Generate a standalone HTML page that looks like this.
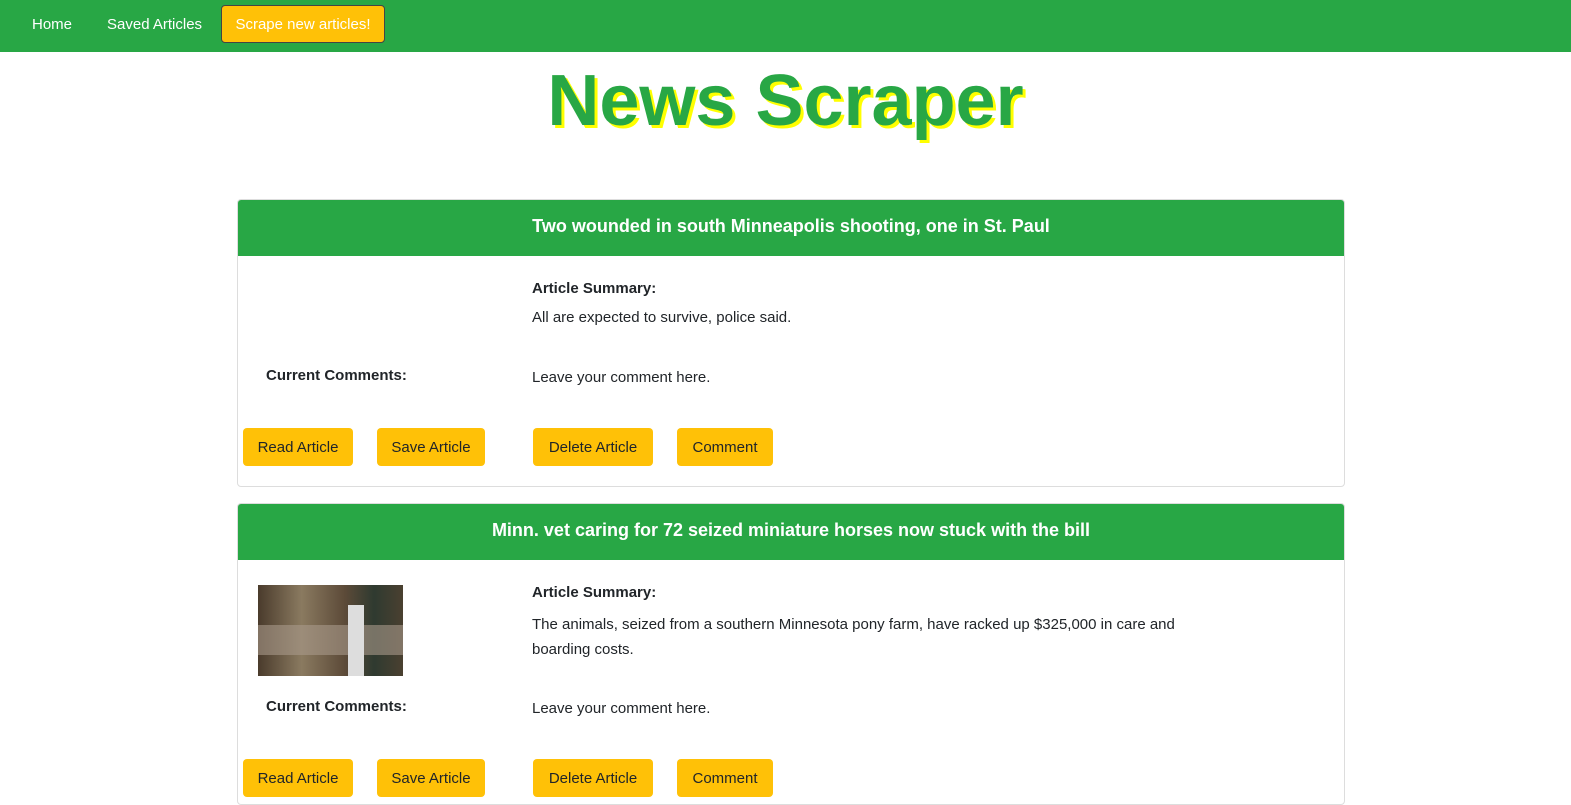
<!DOCTYPE html>
<html><head><style>
body{margin:0;width:1571px;height:778px;overflow:hidden;background:#fff;font-family:"Liberation Sans",sans-serif;color:#212529;font-size:15px;position:relative}
.nav{position:absolute;left:0;top:0;width:1571px;height:52px;background:#28a745}
.nav span{position:absolute;top:16px;color:#fff;font-size:15px}
.scr{position:absolute;left:221px;top:5px;width:162px;height:36px;background:#ffc107;border:1px solid #444;border-radius:4px;color:#fff;font-size:15px;line-height:38px;text-align:center}
h1{position:absolute;left:0;width:1571px;top:56px;margin:0;text-align:center;font-size:72px;font-weight:bold;color:#28a745;text-shadow:3px 3px 0 #ffff00;line-height:90px}
.card{position:absolute;left:237px;width:1106px;border:1px solid #ddd;border-radius:4px;overflow:hidden}
.hd{background:#28a745;color:#fff;font-weight:bold;font-size:18px;text-align:center;height:56px;line-height:52px}
.a{position:absolute;font-size:15px}
.b{font-weight:bold}
.btn{position:absolute;height:38px;line-height:40px;background:#ffc107;border-radius:4px;text-align:center;font-size:15px}
</style></head><body>
<div class="nav"><span style="left:32px">Home</span><span style="left:107px">Saved Articles</span><div class="scr">Scrape new articles!</div></div>
<h1>News Scraper</h1>

<div class="card" style="top:199px;height:286px">
<div class="hd">Two wounded in south Minneapolis shooting, one in St. Paul</div>
<div class="a b" style="left:294px;top:80px">Article Summary:</div>
<div class="a" style="left:294px;top:109px">All are expected to survive, police said.</div>
<div class="a b" style="left:28px;top:167px">Current Comments:</div>
<div class="a" style="left:294px;top:169px">Leave your comment here.</div>
<div class="btn" style="left:5px;top:228px;width:110px">Read Article</div>
<div class="btn" style="left:139px;top:228px;width:108px">Save Article</div>
<div class="btn" style="left:295px;top:228px;width:120px">Delete Article</div>
<div class="btn" style="left:439px;top:228px;width:96px">Comment</div>
</div>

<div class="card" style="top:503px;height:300px">
<div class="hd">Minn. vet caring for 72 seized miniature horses now stuck with the bill</div>
<div style="position:absolute;left:20px;top:81px;width:145px;height:91px;background:linear-gradient(90deg,#4a3b2c,#8a7a60 30%,#5c4a38 60%,#2f3a30 80%,#4a4030)"><div style="position:absolute;left:0;top:40px;width:100%;height:30px;background:#a8998a;opacity:.6"></div><div style="position:absolute;left:90px;top:20px;width:16px;height:71px;background:#ddd"></div></div>
<div class="a b" style="left:294px;top:80px">Article Summary:</div>
<div class="a" style="left:294px;top:108px;width:700px;line-height:25px">The animals, seized from a southern Minnesota pony farm, have racked up $325,000 in care and boarding costs.</div>
<div class="a b" style="left:28px;top:194px">Current Comments:</div>
<div class="a" style="left:294px;top:196px">Leave your comment here.</div>
<div class="btn" style="left:5px;top:255px;width:110px">Read Article</div>
<div class="btn" style="left:139px;top:255px;width:108px">Save Article</div>
<div class="btn" style="left:295px;top:255px;width:120px">Delete Article</div>
<div class="btn" style="left:439px;top:255px;width:96px">Comment</div>
</div>
</body></html>
